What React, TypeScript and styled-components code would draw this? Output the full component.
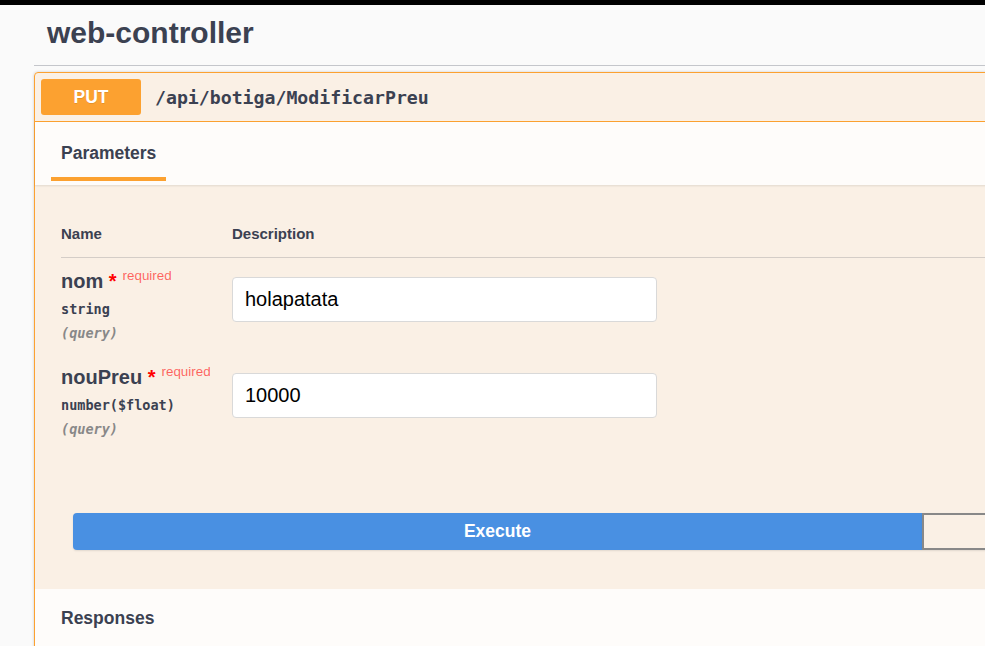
import React from "react";
import styled, { createGlobalStyle } from "styled-components";

const GlobalStyle = createGlobalStyle`
  html, body {
    margin: 0;
    padding: 0;
    background: #fafafa;
    overflow: hidden;
  }
  body {
    font-family: "Liberation Sans", Arial, sans-serif;
    color: #3b4151;
  }
  * { box-sizing: border-box; }
`;

const TopBar = styled.div`
  height: 5px;
  background: #000;
`;

const Wrapper = styled.div`
  width: 1810px;
  padding-left: 34px;
`;

const TagHeader = styled.h3`
  margin: 0;
  padding: 11px 0 15px 13px;
  font-size: 30px;
  line-height: 34px;
  font-weight: 700;
  color: #3b4151;
  border-bottom: 1px solid #c4c6cb;
`;

const Opblock = styled.div`
  margin-top: 6px;
  border: 1px solid #fca130;
  border-radius: 4px;
  background: rgba(252, 161, 48, 0.1);
  box-shadow: 0 0 3px rgba(0, 0, 0, 0.19);
`;

const Summary = styled.div`
  display: flex;
  align-items: center;
  padding: 6px;
  border-bottom: 1px solid #fca130;
`;

const Method = styled.span`
  width: 100px;
  height: 36px;
  display: flex;
  align-items: center;
  justify-content: center;
  background: #fca130;
  border-radius: 3px;
  color: #fff;
  font-weight: 700;
  font-size: 17.5px;
  text-shadow: 0 1px 0 rgba(0, 0, 0, 0.1);
`;

const Path = styled.span`
  margin-left: 14px;
  font-family: "DejaVu Sans Mono", "Liberation Mono", monospace;
  font-weight: 700;
  font-size: 18.2px;
  color: #3b4151;
`;

const SectionHeader = styled.div`
  display: flex;
  padding: 21px 0 4px 26px;
  background: rgba(255, 255, 255, 0.8);
  box-shadow: 0 1px 2px rgba(0, 0, 0, 0.1);
`;

const TabItem = styled.div`
  display: inline-flex;
  flex-direction: column;
  gap: 14px;
  font-weight: 700;
  font-size: 17.5px;
  line-height: 20px;
  color: #3b4151;
`;

const TabBar = styled.div`
  height: 4px;
  margin: 0 -10px;
  background: #fca130;
`;

const TableSection = styled.div`
  padding: 25px 0 25px 26px;
`;

const HeaderRow = styled.div`
  display: grid;
  grid-template-columns: 171px 1fr;
  padding: 16px 0 15px;
  line-height: 16px;
  font-size: 15px;
  font-weight: 700;
  color: #3b4151;
  border-bottom: 1px solid rgba(59, 65, 81, 0.2);
`;

const ParamRow = styled.div`
  display: grid;
  grid-template-columns: 171px 1fr;
  padding: 11px 0 12px;
`;

const NameCol = styled.div`
  display: flex;
  flex-direction: column;
`;

const ParamName = styled.div`
  height: 25px;
  font-size: 20px;
  line-height: 24px;
  font-weight: 700;
  color: #3b4151;
  white-space: nowrap;
`;

const Star = styled.span`
  color: red;
`;

const Required = styled.span`
  font-size: 13.4px;
  line-height: 0;
  font-weight: 400;
  color: rgba(255, 0, 0, 0.6);
  padding-left: 6px;
  vertical-align: 8px;
`;

const ParamType = styled.div`
  padding: 6px 0;
  font-family: "DejaVu Sans Mono", "Liberation Mono", monospace;
  font-size: 13.5px;
  line-height: 18px;
  font-weight: 700;
  color: #3b4151;
`;

const ParamIn = styled.div`
  font-family: "DejaVu Sans Mono", "Liberation Mono", monospace;
  font-size: 13.5px;
  line-height: 18px;
  font-style: italic;
  font-weight: 700;
  color: #888;
`;

const DescCol = styled.div`
  padding-top: 8px;
`;

const TextInput = styled.input`
  display: block;
  width: 425px;
  height: 45px;
  padding: 0 12px;
  border: 1px solid #d9d9d9;
  border-radius: 4px;
  background: #fff;
  font-family: "Liberation Sans", Arial, sans-serif;
  font-size: 20px;
  color: #000;
  outline: none;
`;

const ExecuteWrapper = styled.div`
  display: flex;
  padding: 38px 0 39px 38px;
`;

const ExecuteButton = styled.button`
  width: 849px;
  height: 37px;
  border: none;
  border-radius: 4px 0 0 4px;
  background: #4990e2;
  color: #fff;
  font-family: "Liberation Sans", Arial, sans-serif;
  font-weight: 700;
  font-size: 17.5px;
  box-shadow: 0 1px 2px rgba(0, 0, 0, 0.1);
  cursor: pointer;
`;

const ClearButton = styled.button`
  width: 849px;
  height: 37px;
  border: 2px solid #888;
  border-radius: 0 4px 4px 0;
  background: transparent;
  color: #3b4151;
  font-family: "Liberation Sans", Arial, sans-serif;
  font-weight: 700;
  font-size: 17.5px;
  box-shadow: 0 1px 2px rgba(0, 0, 0, 0.1);
`;

const ResponsesHeader = styled.div`
  padding: 19px 26px 24px;
  background: rgba(255, 255, 255, 0.8);
  font-weight: 700;
  font-size: 17.5px;
  line-height: 20px;
  color: #3b4151;
  min-height: 120px;
`;

type Param = { name: string; type: string; location: string; value: string };

const params: Param[] = [
  { name: "nom", type: "string", location: "(query)", value: "holapatata" },
  { name: "nouPreu", type: "number($float)", location: "(query)", value: "10000" },
];

export default function App() {
  return (
    <>
      <GlobalStyle />
      <TopBar />
      <Wrapper>
        <TagHeader>web-controller</TagHeader>
        <Opblock>
          <Summary>
            <Method>PUT</Method>
            <Path>/api/botiga/ModificarPreu</Path>
          </Summary>
          <SectionHeader>
            <TabItem>
              <span>Parameters</span>
              <TabBar />
            </TabItem>
          </SectionHeader>
          <TableSection>
            <HeaderRow>
              <div>Name</div>
              <div>Description</div>
            </HeaderRow>
            {params.map((p) => (
              <ParamRow key={p.name}>
                <NameCol>
                  <ParamName>
                    {p.name}
                    <Star>{"\u00a0*"}</Star>
                    <Required>required</Required>
                  </ParamName>
                  <ParamType>{p.type}</ParamType>
                  <ParamIn>{p.location}</ParamIn>
                </NameCol>
                <DescCol>
                  <TextInput defaultValue={p.value} />
                </DescCol>
              </ParamRow>
            ))}
          </TableSection>
          <ExecuteWrapper>
            <ExecuteButton>Execute</ExecuteButton>
            <ClearButton>Clear</ClearButton>
          </ExecuteWrapper>
          <ResponsesHeader>Responses</ResponsesHeader>
        </Opblock>
      </Wrapper>
    </>
  );
}
